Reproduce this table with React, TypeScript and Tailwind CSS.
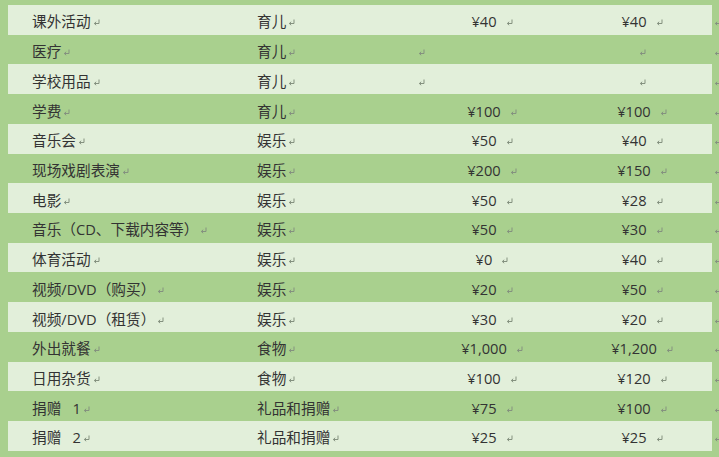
const rows: [string, string, string, string][] = [
  ['课外活动', '育儿', '¥40', '¥40'],
  ['医疗', '育儿', '', ''],
  ['学校用品', '育儿', '', ''],
  ['学费', '育儿', '¥100', '¥100'],
  ['音乐会', '娱乐', '¥50', '¥40'],
  ['现场戏剧表演', '娱乐', '¥200', '¥150'],
  ['电影', '娱乐', '¥50', '¥28'],
  ['音乐（CD、下载内容等）', '娱乐', '¥50', '¥30'],
  ['体育活动', '娱乐', '¥0', '¥40'],
  ['视频/DVD（购买）', '娱乐', '¥20', '¥50'],
  ['视频/DVD（租赁）', '娱乐', '¥30', '¥20'],
  ['外出就餐', '食物', '¥1,000', '¥1,200'],
  ['日用杂货', '食物', '¥100', '¥120'],
  ['捐赠\u2002 1', '礼品和捐赠', '¥75', '¥100'],
  ['捐赠\u2002 2', '礼品和捐赠', '¥25', '¥25'],
];

function Mark({ className = '' }: { className?: string }) {
  return (
    <svg
      width="7"
      height="7"
      viewBox="0 0 7 7"
      className={`inline-block shrink-0 align-[1px] ${className}`}
      fill="none"
      stroke="#84917f"
      strokeWidth="1"
    >
      <path d="M6 0.5V4.5H1.5" />
      <path d="M3.2 2.8L1.3 4.5L3.2 6.2" />
    </svg>
  );
}

export default function App() {
  return (
    <div
      className="w-[719px] h-[457px] overflow-hidden bg-[#a9d08e] pt-[5px] pl-[8px] text-[14.67px] text-[#333]"
      style={{ fontFamily: '"Open Sans", "Noto Sans CJK SC", sans-serif' }}
    >
      {rows.map(([name, cat, a, b], i) => (
        <div key={i} className="flex h-[29.73px] items-center">
          <div
            className={`flex h-full w-[704px] items-center pt-[3px] ${
              i % 2 === 0 ? 'bg-[#e2efda]' : ''
            }`}
          >
            <div className="w-[225px] pl-[24px] whitespace-pre">
              {name}
              <Mark className="ml-[2px]" />
            </div>
            <div className="w-[179px] pl-[24px]">
              {cat}
              <Mark className="ml-[2px]" />
            </div>
            {a ? (
              <div className="w-[160px] text-center">
                {a}
                <Mark className="ml-[9px]" />
              </div>
            ) : (
              <div className="w-[160px] pl-[6px]">
                <Mark />
              </div>
            )}
            <div className="w-[140px] text-center">
              {b}
              {b ? <Mark className="ml-[9px]" /> : <Mark />}
            </div>
          </div>
          <div className="pl-[2px] pt-[3px]">
            <Mark />
          </div>
        </div>
      ))}
    </div>
  );
}
